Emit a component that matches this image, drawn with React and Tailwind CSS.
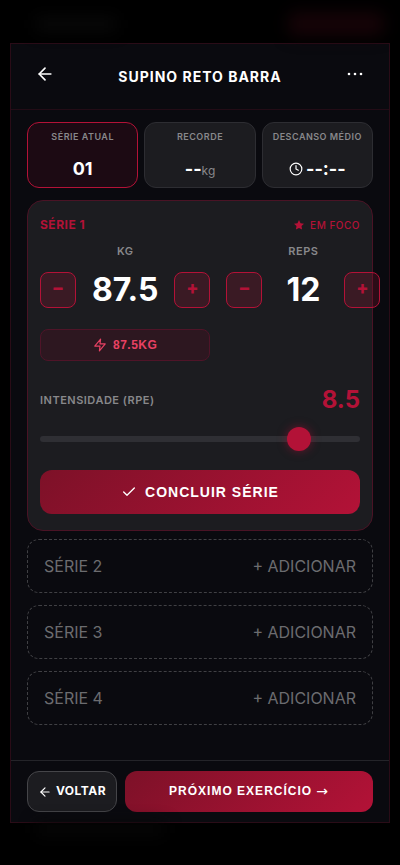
import { useState } from "react";
import { ArrowLeft, Check, Clock } from "lucide-react";

const PENDING_SETS = [2, 3, 4];
const SUGGESTED_WEIGHT = 87.5;

function StatCard({ label, active, children }) {
  return (
    <div
      className={`flex h-[66px] flex-col items-center rounded-xl border pt-2 ${
        active ? "border-[#b31237] bg-[#1c0a13]" : "border-[#2d2d32] bg-[#1c1c20]"
      }`}
    >
      <span className="whitespace-nowrap text-[9px] leading-3 font-semibold tracking-[0.5px] text-[#88888b]">
        {label}
      </span>
      <div className="mt-3 flex items-center text-lg leading-7 font-bold text-white">{children}</div>
    </div>
  );
}

function StepButton({ label, onClick, children }) {
  return (
    <button
      type="button"
      aria-label={label}
      onClick={onClick}
      className="flex size-9 shrink-0 items-center justify-center rounded-lg border border-[#b31237] bg-[#b31237]/20 pb-1 text-lg font-extrabold text-[#b31237]"
    >
      {children}
    </button>
  );
}

function Stepper({ label, value, step, onChange }) {
  return (
    <div>
      <div className="text-center text-[11px] leading-4 font-semibold tracking-[0.5px] text-[#88888b]">
        {label}
      </div>
      <div className="mt-[13px] flex h-9 items-center justify-center gap-4">
        <StepButton label={`Diminuir ${label}`} onClick={() => onChange(value - step)}>
          −
        </StepButton>
        <span className="min-w-[50px] text-center text-[32px] leading-9 font-bold text-white">{value}</span>
        <StepButton label={`Aumentar ${label}`} onClick={() => onChange(value + step)}>
          +
        </StepButton>
      </div>
    </div>
  );
}

export default function App() {
  const [weight, setWeight] = useState(SUGGESTED_WEIGHT);
  const [reps, setReps] = useState(12);
  const [rpe, setRpe] = useState(8.5);

  return (
    <div className="flex min-h-screen flex-col overflow-x-hidden bg-black font-['Inter',sans-serif]">
      {/* dimmed page behind the dialog */}
      <div className="flex h-[43px] items-center justify-between pt-1 pr-4 pl-9">
        <div className="h-3 w-20 bg-[#0a0a0a] blur-sm" />
        <div className="h-6 w-24 rounded-lg bg-[#160307] blur-sm" />
      </div>

      <div
        role="dialog"
        aria-labelledby="exercise-title"
        className="mx-[10px] flex flex-1 flex-col border border-[#2a0c17] bg-[#0a0a0f]"
      >
        <header className="flex h-[66px] items-center justify-between border-b border-[#230c16] px-4">
          <button type="button" aria-label="Voltar" className="flex size-9 items-center justify-center pb-1.5 text-white">
            <ArrowLeft size={20} />
          </button>
          <h1 id="exercise-title" className="text-sm font-bold tracking-[1px] text-white">
            SUPINO RETO BARRA
          </h1>
          <button
            type="button"
            aria-label="Mais opções"
            className="flex size-9 items-center justify-center pb-1.5 text-white"
          >
            <svg width="20" height="20" viewBox="0 0 20 20" fill="currentColor">
              <circle cx="4" cy="10" r="1.3" />
              <circle cx="10" cy="10" r="1.3" />
              <circle cx="16" cy="10" r="1.3" />
            </svg>
          </button>
        </header>

        <main className="flex-1 px-4 py-3">
          <div className="grid grid-cols-3 gap-1.5">
            <StatCard label="SÉRIE ATUAL" active>
              01
            </StatCard>
            <StatCard label="RECORDE">
              --<span className="pt-1 text-xs font-normal text-[#88888b]">kg</span>
            </StatCard>
            <StatCard label="DESCANSO MÉDIO">
              <Clock size={14} className="mr-[3px]" />
              --:--
            </StatCard>
          </div>

          <section className="mt-3 rounded-2xl border border-[#4a1325] bg-[#1c1c20] px-3 py-4">
            <div className="flex items-center justify-between text-[#b31237]">
              <h2 className="text-xs leading-4 font-bold tracking-[0.5px]">SÉRIE 1</h2>
              <div className="flex items-center gap-[5px] text-[10px] leading-4 font-medium tracking-[0.5px]">
                <svg width="12" height="12" viewBox="0 0 24 24" fill="currentColor">
                  <path d="M12 2l3.09 6.26L22 9.27l-5 4.87 1.18 6.88L12 17.77l-6.18 3.25L7 14.14 2 9.27l6.91-1.01z" />
                </svg>
                EM FOCO
              </div>
            </div>

            <div className="mt-2.5 grid grid-cols-[1fr_1fr] gap-x-4">
              <Stepper label="KG" value={weight} step={2.5} onChange={setWeight} />
              <Stepper label="REPS" value={reps} step={1} onChange={setReps} />
              <button
                type="button"
                onClick={() => setWeight(SUGGESTED_WEIGHT)}
                className="mt-[21px] flex h-8 items-center justify-center gap-1.5 rounded-lg border border-[#4f1428] bg-[#2d1720] font-['Liberation_Sans',sans-serif] text-xs font-bold tracking-[0.5px] text-[#e84163]"
              >
                <svg
                  width="14"
                  height="14"
                  viewBox="0 0 24 24"
                  fill="none"
                  stroke="currentColor"
                  strokeWidth="2"
                  strokeLinejoin="round"
                >
                  <path d="M13 2L3 14h9l-1 8 10-12h-9z" />
                </svg>
                {SUGGESTED_WEIGHT}KG
              </button>
            </div>

            <div className="mt-[23px] flex items-center justify-between">
              <label htmlFor="rpe" className="text-[11px] font-semibold tracking-[0.5px] text-[#88888b]">
                INTENSIDADE (RPE)
              </label>
              <output htmlFor="rpe" className="text-2xl leading-8 font-bold text-[#b31237]">
                {rpe}
              </output>
            </div>
            <div className="mt-[11px] flex h-6 items-center">
              <input
                id="rpe"
                type="range"
                min="1"
                max="10"
                step="0.5"
                value={rpe}
                onChange={(e) => setRpe(Number(e.target.value))}
                className="h-1.5 w-full appearance-none rounded-full bg-[#2f2f34] [&::-webkit-slider-thumb]:size-6 [&::-webkit-slider-thumb]:appearance-none [&::-webkit-slider-thumb]:rounded-full [&::-webkit-slider-thumb]:bg-[#b31237] [&::-webkit-slider-thumb]:shadow-[0_0_10px_rgba(179,18,55,0.5)]"
              />
            </div>

            <button
              type="button"
              className="mt-[19px] flex h-11 w-full items-center justify-center gap-2 rounded-xl bg-linear-[135deg,#7d1128,#b31237] font-['Liberation_Sans',sans-serif] text-sm font-bold tracking-[1px] text-white"
            >
              <Check size={16} />
              CONCLUIR SÉRIE
            </button>
          </section>

          <div className="mt-2 flex flex-col gap-3">
            {PENDING_SETS.map((n) => (
              <button
                key={n}
                type="button"
                className="flex h-[54px] items-center justify-between rounded-xl border border-dashed border-[#404044] px-4 text-base text-[#6c6c6f]"
              >
                <span>SÉRIE {n}</span>
                <span>+ ADICIONAR</span>
              </button>
            ))}
          </div>
        </main>

        <footer className="flex gap-2 border-t border-[#242429] px-4 py-2.5">
          <button
            type="button"
            className="flex h-[41px] w-[90px] items-center justify-center gap-1 rounded-xl border border-[#454549] bg-[#1c1c20] pb-0.5 text-xs font-bold tracking-[0.5px] text-white"
          >
            <ArrowLeft size={14} className="mt-0.5" />
            VOLTAR
          </button>
          <button
            type="button"
            className="flex h-[41px] flex-1 items-center justify-center gap-1 rounded-xl bg-linear-[135deg,#7d1128,#b31237] pb-0.5 font-['Liberation_Sans',sans-serif] text-xs font-bold tracking-[1px] text-white"
          >
            PRÓXIMO EXERCÍCIO
            <span className="font-['DejaVu_Sans',sans-serif] text-sm leading-4 font-normal">→</span>
          </button>
        </footer>
      </div>

      <div className="flex h-[42px] items-start gap-6 px-9">
        <div className="h-3 w-32 bg-[#070707] blur-sm" />
      </div>
    </div>
  );
}
